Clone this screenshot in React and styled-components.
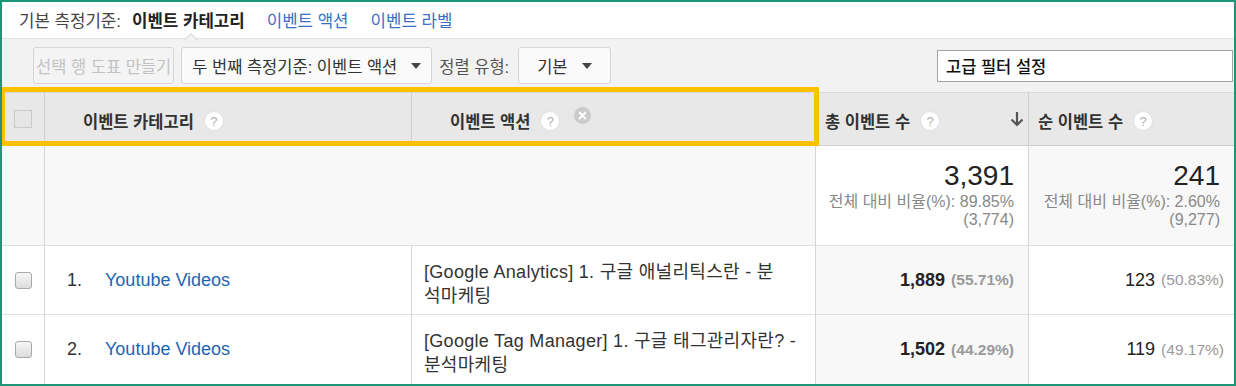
import styled, { createGlobalStyle } from "styled-components";

const GlobalStyle = createGlobalStyle`
  html, body {
    margin: 0;
    padding: 0;
    background: #ffffff;
  }
  body {
    font-family: "Liberation Sans", "Noto Sans CJK KR", sans-serif;
    color: #333;
  }
`;

const Frame = styled.div`
  position: relative;
  box-sizing: border-box;
  width: 1236px;
  height: 386px;
  border: 2px solid #1d9677;
  overflow: hidden;
  background: #fff;
  display: flex;
  flex-direction: column;
`;

const Highlight = styled.div`
  position: absolute;
  left: -2px;
  top: 85px;
  width: 819px;
  height: 59px;
  box-sizing: border-box;
  border: 5px solid #ffc000;
  pointer-events: none;
`;

const DimBar = styled.div`
  height: 36px;
  flex: none;
  display: flex;
  align-items: center;
  padding-left: 17px;
  font-size: 16.8px;
  gap: 22px;
`;

const DimLabel = styled.span`
  color: #444;
  margin-right: -11px;
`;

const DimActive = styled.span`
  position: relative;
  font-weight: bold;
  color: #222;

  &::after {
    content: "";
    position: absolute;
    left: 50%;
    bottom: -13px;
    width: 9px;
    height: 9px;
    margin-left: -2px;
    background: #f2f2f2;
    border-top: 1px solid #d9d9d9;
    border-left: 1px solid #d9d9d9;
    transform: rotate(45deg);
  }
`;

const DimLink = styled.span`
  color: #3a71c6;
`;

const Toolbar = styled.div`
  height: 54px;
  flex: none;
  box-sizing: border-box;
  border-top: 1px solid #e0e0e0;
  background: #f2f2f2;
  display: flex;
  align-items: center;
  padding-left: 31px;
  font-size: 16.5px;
`;

const Button = styled.div`
  box-sizing: border-box;
  height: 37px;
  display: flex;
  align-items: center;
  gap: 14px;
  padding: 0 ${(p) => p.$pad || 10}px;
  margin-right: ${(p) => p.$gap || 0}px;
  border: 1px solid #d6d6d6;
  border-radius: 3px;
  background: ${(p) => (p.$disabled ? "#f4f4f4" : "#fafafa")};
  color: ${(p) => (p.$disabled ? "#c2c2c2" : "#333")};
  white-space: nowrap;
`;

const Caret = styled.span`
  width: 0;
  height: 0;
  border-left: 5px solid transparent;
  border-right: 5px solid transparent;
  border-top: 6px solid #444;
`;

const ToolLabel = styled.span`
  color: #555;
  margin-right: 9px;
`;

const FilterBox = styled.div`
  margin-left: auto;
  margin-right: 1px;
  box-sizing: border-box;
  width: 296px;
  height: 32px;
  display: flex;
  align-items: center;
  padding-left: 8px;
  border: 1px solid #a3a3a3;
  background: #fff;
  color: #111;
  font-weight: 500;
`;

const Table = styled.div`
  display: grid;
  grid-template-columns: 42px 367px 404px 213px 1fr;
  grid-template-rows: 54px 100px 69px 69px;
`;

const HeadCell = styled.div`
  box-sizing: border-box;
  display: flex;
  align-items: center;
  padding: 4px ${(p) => p.$right || 0}px 0 ${(p) => p.$left || 0}px;
  background: #e8e8e8;
  border-top: 1px solid #d9d9d9;
  border-bottom: 1px solid #cdcdcd;
  border-left: ${(p) => (p.$first ? "none" : "1px solid #d0d0d0")};
  font-size: 16.5px;
  font-weight: bold;
  color: #333;
  white-space: nowrap;
`;

const HeadBox = styled.span`
  box-sizing: border-box;
  width: 18px;
  height: 18px;
  margin-left: 12px;
  margin-top: -4px;
  border: 1px solid #c9c9c9;
  background: #e6e6e6;
`;

const Help = styled.span`
  box-sizing: border-box;
  width: 20px;
  height: 20px;
  margin-left: 10px;
  border-radius: 50%;
  background: #fff;
  border: 1px solid #e0e0e0;
  color: #b0b0b0;
  font-size: 13px;
  font-weight: normal;
  display: flex;
  align-items: center;
  justify-content: center;
`;

const Clear = styled.span`
  width: 17px;
  height: 17px;
  margin-left: 14px;
  margin-bottom: 12px;
  border-radius: 50%;
  background: #cbcbcb;
  display: flex;
  align-items: center;
  justify-content: center;
`;

const SortArrow = styled.span`
  margin-left: auto;
  display: flex;
  margin-top: -4px;
`;

const Cell = styled.div`
  box-sizing: border-box;
  display: flex;
  align-items: center;
  border-left: ${(p) => (p.$first ? "none" : "1px solid #d6d6d6")};
  border-bottom: ${(p) => (p.$last ? "none" : "1px solid #e0e0e0")};
  background: ${(p) => p.$bg || "#fff"};
  grid-column: ${(p) => p.$span || "auto"};
`;

const CheckCell = styled(Cell)`
  justify-content: center;
`;

const Check = styled.span`
  box-sizing: border-box;
  width: 17px;
  height: 17px;
  border: 1px solid #a9a9a9;
  border-radius: 3px;
  background: linear-gradient(#f7f7f7, #dcdcdc);
`;

const SummaryCell = styled(Cell)`
  flex-direction: column;
  align-items: flex-end;
  justify-content: flex-start;
  padding: 13px ${(p) => p.$right}px 0 0;
  color: #888;
  font-size: 16px;
  line-height: 18px;
`;

const BigNumber = styled.div`
  font-size: 28px;
  line-height: 34px;
  color: #222;
`;

const NameCell = styled(Cell)`
  padding-left: 22px;
  font-size: 18px;
`;

const Index = styled.span`
  width: 38px;
  color: #333;
`;

const Link = styled.span`
  color: #1f64b4;
`;

const ActionCell = styled(Cell)`
  flex-direction: column;
  align-items: flex-start;
  justify-content: center;
  padding: 7px 12px 0 12px;
  font-size: 18px;
  line-height: 24px;
  letter-spacing: 0.3px;
  color: #333;
  white-space: nowrap;
`;

const MetricCell = styled(Cell)`
  justify-content: flex-end;
  padding-right: ${(p) => p.$right}px;
  font-size: 18px;
  color: #222;
  font-weight: ${(p) => (p.$bold ? "bold" : "normal")};
  white-space: nowrap;
`;

const Share = styled.span`
  margin-left: 6px;
  font-size: 15.5px;
  color: #999;
`;

const rows = [
  {
    idx: "1.",
    category: "Youtube Videos",
    action: ["[Google Analytics] 1. 구글 애널리틱스란 - 분", "석마케팅"],
    total: "1,889",
    totalShare: "(55.71%)",
    unique: "123",
    uniqueShare: "(50.83%)",
  },
  {
    idx: "2.",
    category: "Youtube Videos",
    action: ["[Google Tag Manager] 1. 구글 태그관리자란? -", "분석마케팅"],
    total: "1,502",
    totalShare: "(44.29%)",
    unique: "119",
    uniqueShare: "(49.17%)",
  },
];

export default function App() {
  return (
    <>
      <GlobalStyle />
      <Frame>
        <DimBar>
          <DimLabel>기본 측정기준:</DimLabel>
          <DimActive>이벤트 카테고리</DimActive>
          <DimLink>이벤트 액션</DimLink>
          <DimLink>이벤트 라벨</DimLink>
        </DimBar>

        <Toolbar>
          <Button $disabled $pad={2} $gap={7}>
            선택 행 도표 만들기
          </Button>
          <Button $gap={7} $pad={10}>
            두 번째 측정기준: 이벤트 액션
            <Caret />
          </Button>
          <ToolLabel>정렬 유형:</ToolLabel>
          <Button $pad={18}>
            기본
            <Caret />
          </Button>
          <FilterBox>고급 필터 설정</FilterBox>
        </Toolbar>

        <Table>
          <HeadCell $first>
            <HeadBox />
          </HeadCell>
          <HeadCell $left={38}>
            이벤트 카테고리
            <Help>?</Help>
          </HeadCell>
          <HeadCell $left={38}>
            이벤트 액션
            <Help>?</Help>
            <Clear>
              <svg width="9" height="9" viewBox="0 0 9 9">
                <path d="M1 1L8 8M8 1L1 8" stroke="#fff" strokeWidth="2" />
              </svg>
            </Clear>
          </HeadCell>
          <HeadCell $left={9} $right={4}>
            총 이벤트 수
            <Help>?</Help>
            <SortArrow>
              <svg width="14" height="16" viewBox="0 0 14 16">
                <path
                  d="M7 1V14M1.5 8.5L7 14L12.5 8.5"
                  stroke="#555"
                  strokeWidth="2.2"
                  fill="none"
                />
              </svg>
            </SortArrow>
          </HeadCell>
          <HeadCell $left={9}>
            순 이벤트 수
            <Help>?</Help>
          </HeadCell>

          <CheckCell $first $bg="#f8f8f8" />
          <Cell $span="span 2" $bg="#f8f8f8" />
          <SummaryCell $right={14}>
            <BigNumber>3,391</BigNumber>
            <div>전체 대비 비율(%): 89.85%</div>
            <div>(3,774)</div>
          </SummaryCell>
          <SummaryCell $right={14} $bg="#f8f8f8">
            <BigNumber>241</BigNumber>
            <div>전체 대비 비율(%): 2.60%</div>
            <div>(9,277)</div>
          </SummaryCell>

          {rows.map((r, i) => {
            const last = i === rows.length - 1;
            return [
              <CheckCell key={`c${i}`} $first $last={last}>
                <Check />
              </CheckCell>,
              <NameCell key={`n${i}`} $last={last}>
                <Index>{r.idx}</Index>
                <Link>{r.category}</Link>
              </NameCell>,
              <ActionCell key={`a${i}`} $last={last}>
                {r.action.map((line) => (
                  <span key={line}>{line}</span>
                ))}
              </ActionCell>,
              <MetricCell key={`t${i}`} $last={last} $bg="#f8f8f8" $right={14} $bold>
                {r.total}
                <Share>{r.totalShare}</Share>
              </MetricCell>,
              <MetricCell key={`u${i}`} $last={last} $right={10}>
                {r.unique}
                <Share>{r.uniqueShare}</Share>
              </MetricCell>,
            ];
          })}
        </Table>
        <Highlight />
      </Frame>
    </>
  );
}
